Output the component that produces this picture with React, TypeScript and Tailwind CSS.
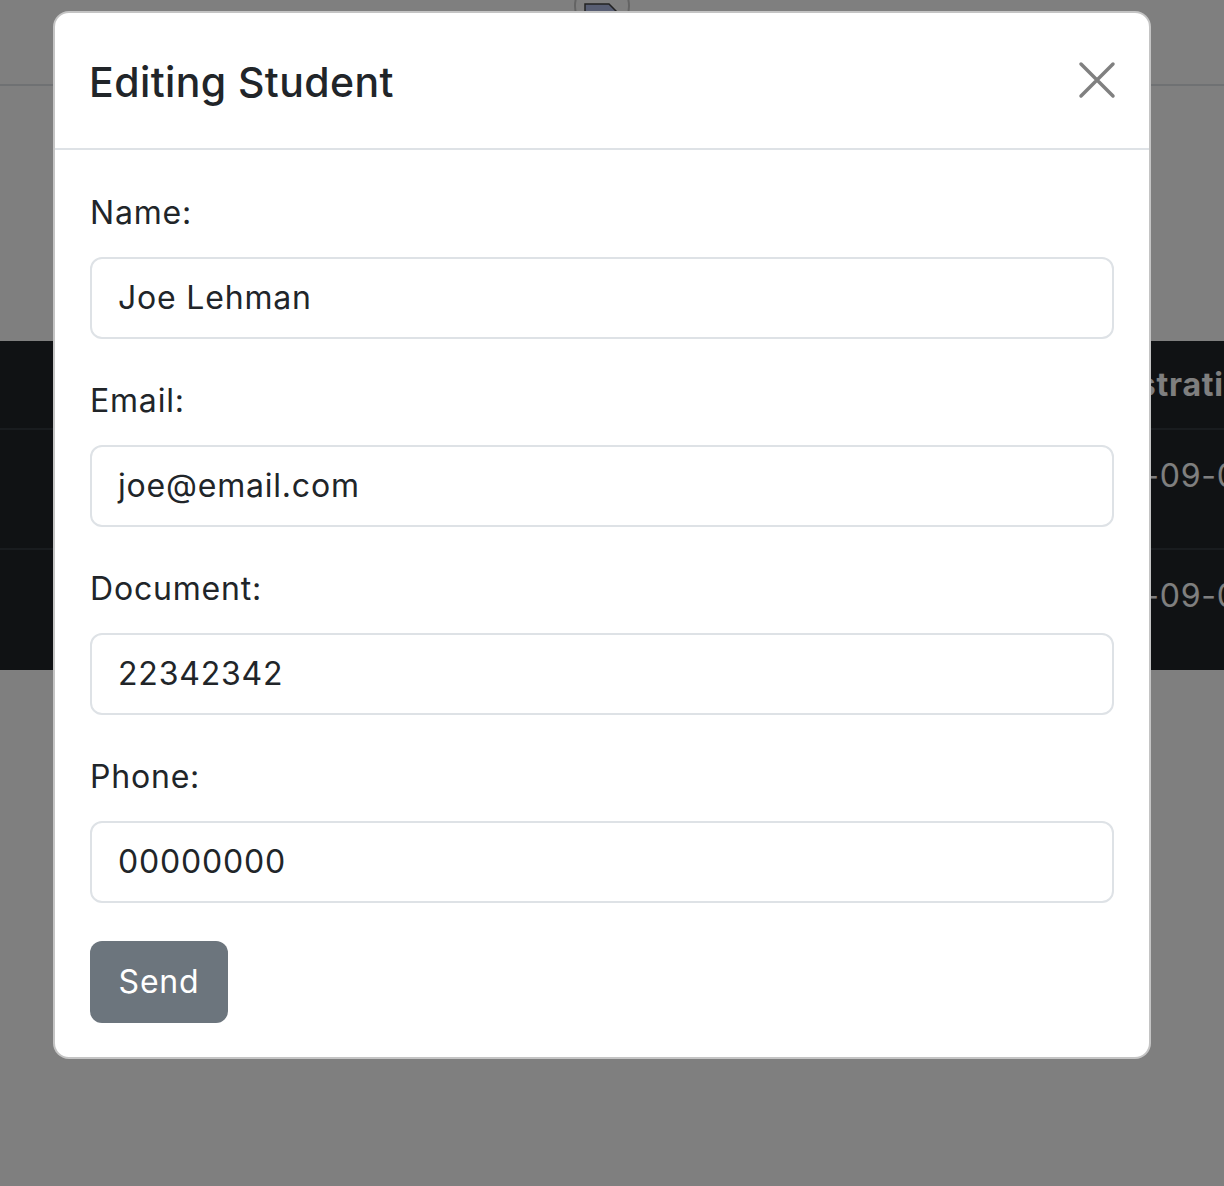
import React from "react";

const fields = [
  { label: "Name:", value: "Joe Lehman" },
  { label: "Email:", value: "joe@email.com" },
  { label: "Document:", value: "22342342" },
  { label: "Phone:", value: "00000000" },
];

const rows = [
  { name: "Joe Lehman", email: "joe@email.com", date: "2023-09-05" },
  { name: "Ana Souza", email: "ana@email.com", date: "2023-09-06" },
];

const App = () => {
  return (
    <div
      className="relative w-[1224px] h-[1186px] overflow-hidden bg-white"
      style={{ fontFamily: "Inter, 'Noto Sans', sans-serif" }}
    >
      {/* page behind the modal */}
      <header className="h-[86px] border-b-2 border-[#dee2e6] pl-[574px] overflow-hidden">
        <div className="mt-[-22px] w-[56px] h-[56px] rounded-full border-2 border-[#c8c8c8] flex justify-center pt-[23px]">
          <svg width="36" height="30" viewBox="0 0 36 30">
            <path d="M1 1h24l9 9v19H1z" fill="#b0bde6" stroke="#444" strokeWidth="1.5" />
          </svg>
        </div>
      </header>

      <div className="h-[255px]" />

      <div className="bg-[#212529] text-white text-[32px] tracking-[0.025em]">
        <div className="grid grid-cols-[240px_340px_212px_204px_1fr] h-[89px] items-center font-bold border-b-2 border-[#32383e] px-[70px]">
          <span>Name</span>
          <span>Email</span>
          <span>Document</span>
          <span>Phone</span>
          <span className="whitespace-nowrap">Registration</span>
        </div>
        {rows.map((r, i) => (
          <div
            key={i}
            className={`grid grid-cols-[240px_340px_212px_200px_1fr] h-[120px] items-start pt-[22px] leading-[48px] px-[70px] ${
              i === 0 ? "border-b-2 border-[#32383e]" : ""
            }`}
          >
            <span>{r.name}</span>
            <span>{r.email}</span>
            <span>22342342</span>
            <span>00000000</span>
            <span className="whitespace-nowrap">{r.date}</span>
          </div>
        ))}
      </div>

      {/* backdrop + modal */}
      <div className="absolute inset-0 bg-black/50 pt-[11px] pl-[53px]">
        <div className="w-[1098px] bg-white border-2 border-[#6b6b6b]/40 rounded-[16px] overflow-hidden">
          <div className="h-[137px] border-b-2 border-[#dee2e6] flex items-center justify-between px-[35px]">
            <h5 className="text-[41px] font-medium tracking-[0.01em] text-[#212529] leading-[48px] mt-[2px] ml-[-1px]">
              Editing Student
            </h5>
            <svg width="38" height="38" viewBox="0 0 38 38" className="mr-[-2px] mt-[-2px]">
              <path
                d="M3 3L35 35M35 3L3 35"
                stroke="#808080"
                strokeWidth="3.5"
                strokeLinecap="round"
              />
            </svg>
          </div>

          <div className="px-[35px] pt-[39px] pb-[34px]">
            {fields.map((f) => (
              <div key={f.label} className="mb-[38px] last:mb-[35px]">
                <label className="block text-[32px] tracking-[0.025em] leading-[48px] text-[#212529] mb-[20px]">
                  {f.label}
                </label>
                <div className="h-[82px] border-2 border-[#dee2e6] rounded-[12px] px-[26px] flex items-center text-[32px] tracking-[0.025em] text-[#212529]">
                  {f.value}
                </div>
              </div>
            ))}
            <button className="w-[138px] h-[82px] rounded-[12px] bg-[#6c757d] text-white text-[32px] tracking-[0.025em]">
              Send
            </button>
          </div>
        </div>
      </div>
    </div>
  );
};

export default App;
